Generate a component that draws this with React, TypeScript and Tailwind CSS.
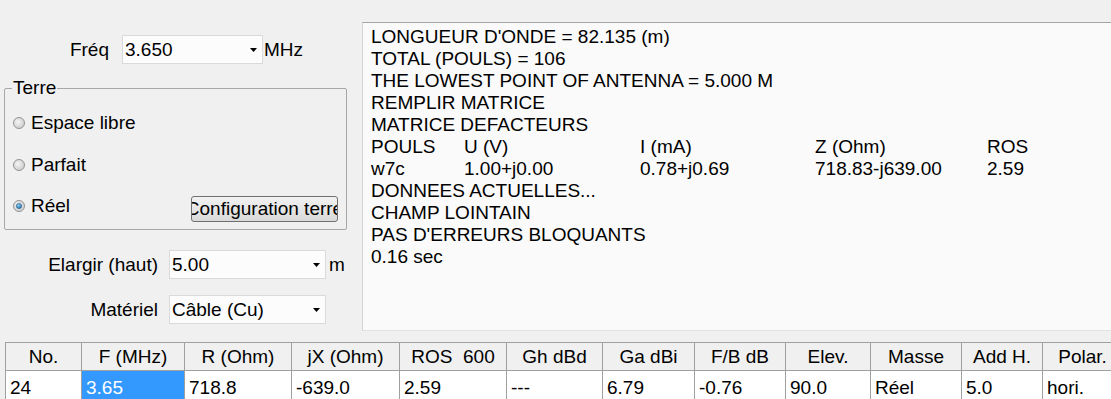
import React from 'react'

const COLS = [
  { w: 'w-[76px]', head: 'No.', val: '24' },
  { w: 'w-[103px]', head: 'F (MHz)', val: '3.65', sel: true },
  { w: 'w-[107px]', head: 'R (Ohm)', val: '718.8' },
  { w: 'w-[108px]', head: 'jX (Ohm)', val: '-639.0' },
  { w: 'w-[107px]', head: 'ROS  600', val: '2.59' },
  { w: 'w-[96px]', head: 'Gh dBd', val: '---' },
  { w: 'w-[92px]', head: 'Ga dBi', val: '6.79' },
  { w: 'w-[91px]', head: 'F/B dB', val: '-0.76' },
  { w: 'w-[85px]', head: 'Elev.', val: '90.0' },
  { w: 'w-[91px]', head: 'Masse', val: 'Réel' },
  { w: 'w-[81px]', head: 'Add H.', val: '5.0' },
  { w: 'w-[80px]', head: 'Polar.', val: 'hori.' },
]

function Combo({ value, className }: { value: string; className: string }) {
  return (
    <div
      className={
        'h-[29px] flex items-center pl-[2px] pr-[5px] bg-[#fcfcfc] border border-[#dadada] ' +
        className
      }
    >
      <span className="flex-1 whitespace-nowrap">{value}</span>
      <svg width="7" height="4" viewBox="0 0 7 4">
        <polygon points="0,0 7,0 3.5,4" fill="#000" />
      </svg>
    </div>
  )
}

function Radio({ checked }: { checked?: boolean }) {
  return (
    <svg width="12" height="12" viewBox="0 0 12 12" className="shrink-0">
      <defs>
        <radialGradient id={checked ? 'rg1' : 'rg0'} cx="0.4" cy="0.4" r="0.7">
          <stop offset="0" stopColor="#f4f4f4" />
          <stop offset="1" stopColor="#c8c8c8" />
        </radialGradient>
        <radialGradient id="blue" cx="0.4" cy="0.35" r="0.7">
          <stop offset="0" stopColor="#8fd0f5" />
          <stop offset="1" stopColor="#1a6ea8" />
        </radialGradient>
      </defs>
      <circle cx="6" cy="6" r="5.5" fill={`url(#${checked ? 'rg1' : 'rg0'})`} stroke="#939393" />
      {checked && <circle cx="6" cy="6" r="2.6" fill="url(#blue)" stroke="#2a5d86" strokeWidth="0.6" />}
    </svg>
  )
}

export default function App() {
  return (
    <div className="w-[1111px] h-[399px] overflow-hidden bg-[#f0f0f0] text-black text-[19px] leading-[22px] font-['Liberation_Sans',Arial,sans-serif]">
      <div className="flex h-[342px]">
        {/* Left controls */}
        <div className="w-[362px] shrink-0 flex flex-col">
          <div className="mt-[35px] flex items-center h-[29px]">
            <span className="w-[109px] text-right">Fréq</span>
            <Combo className="ml-[13px] w-[141px]" value="3.650" />
            <span className="ml-[1px]">MHz</span>
          </div>

          <fieldset className="mt-[14px] ml-[4px] w-[343px] border border-[#a7a7a7] rounded-[2px] pb-[7px]">
            <legend className="ml-[7px] px-[1px] leading-[20px]">Terre</legend>
            <div className="mt-[14px] h-[22px] flex items-center">
              <span className="ml-[8px] flex"><Radio /></span>
              <span className="ml-[6px]">Espace libre</span>
            </div>
            <div className="mt-[20px] h-[22px] flex items-center">
              <span className="ml-[8px] flex"><Radio /></span>
              <span className="ml-[6px]">Parfait</span>
            </div>
            <div className="mt-[19px] flex items-start">
              <div className="h-[22px] flex items-center">
                <span className="ml-[8px] flex"><Radio checked /></span>
                <span className="ml-[6px]">Réel</span>
              </div>
              <button className="ml-auto mr-[8px] mt-[1px] w-[147px] h-[26px] flex items-center justify-center overflow-hidden whitespace-nowrap rounded-[3px] border border-[#707070] bg-gradient-to-b from-[#f2f2f2] to-[#d9d9d9]">
                Configuration terre
              </button>
            </div>
          </fieldset>

          <div className="mt-[20px] flex items-center h-[29px]">
            <span className="w-[158px] text-right">Elargir (haut)</span>
            <Combo className="ml-[11px] w-[157px]" value="5.00" />
            <span className="ml-[3px]">m</span>
          </div>
          <div className="mt-[16px] flex items-center h-[29px]">
            <span className="w-[158px] text-right">Matériel</span>
            <Combo className="ml-[11px] w-[157px]" value="Câble (Cu)" />
          </div>
        </div>

        {/* Output text */}
        <div className="flex-1 mt-[22px] h-[309px] bg-[#fafafa] border-t border-t-[#a5a5a5] border-l border-l-[#d4d4d4] border-b border-b-[#e2e2e2] pl-[8px] pt-[3px] whitespace-nowrap">
          <div>LONGUEUR D'ONDE = 82.135 (m)</div>
          <div>TOTAL (POULS) = 106</div>
          <div>THE LOWEST POINT OF ANTENNA = 5.000 M</div>
          <div>REMPLIR MATRICE</div>
          <div>MATRICE DEFACTEURS</div>
          <div className="grid grid-cols-[93px_176px_175px_172px_auto]">
            <span>POULS</span>
            <span>U (V)</span>
            <span>I (mA)</span>
            <span>Z (Ohm)</span>
            <span>ROS</span>
            <span>w7c</span>
            <span>1.00+j0.00</span>
            <span>0.78+j0.69</span>
            <span>718.83-j639.00</span>
            <span>2.59</span>
          </div>
          <div>DONNEES ACTUELLES...</div>
          <div>CHAMP LOINTAIN</div>
          <div>PAS D'ERREURS BLOQUANTS</div>
          <div>0.16 sec</div>
        </div>
      </div>

      {/* Results table */}
      <div className="ml-[5px] w-max border-t border-l border-[#a0a0a0]">
        <div className="flex bg-[#f0f0f0]">
          {COLS.map((c) => (
            <div
              key={c.head}
              className={c.w + ' h-[28px] shrink-0 border-r border-b border-[#a0a0a0] flex items-center justify-center whitespace-pre'}
            >
              {c.head}
            </div>
          ))}
        </div>
        <div className="flex bg-white">
          {COLS.map((c) => (
            <div
              key={c.head}
              className={
                c.w +
                ' h-[29px] shrink-0 border-r border-[#a0a0a0] flex items-center pl-[4px] pt-[4px] whitespace-nowrap ' +
                (c.sel ? 'bg-[#3399ff] text-white' : '')
              }
            >
              {c.val}
            </div>
          ))}
        </div>
      </div>
    </div>
  )
}
